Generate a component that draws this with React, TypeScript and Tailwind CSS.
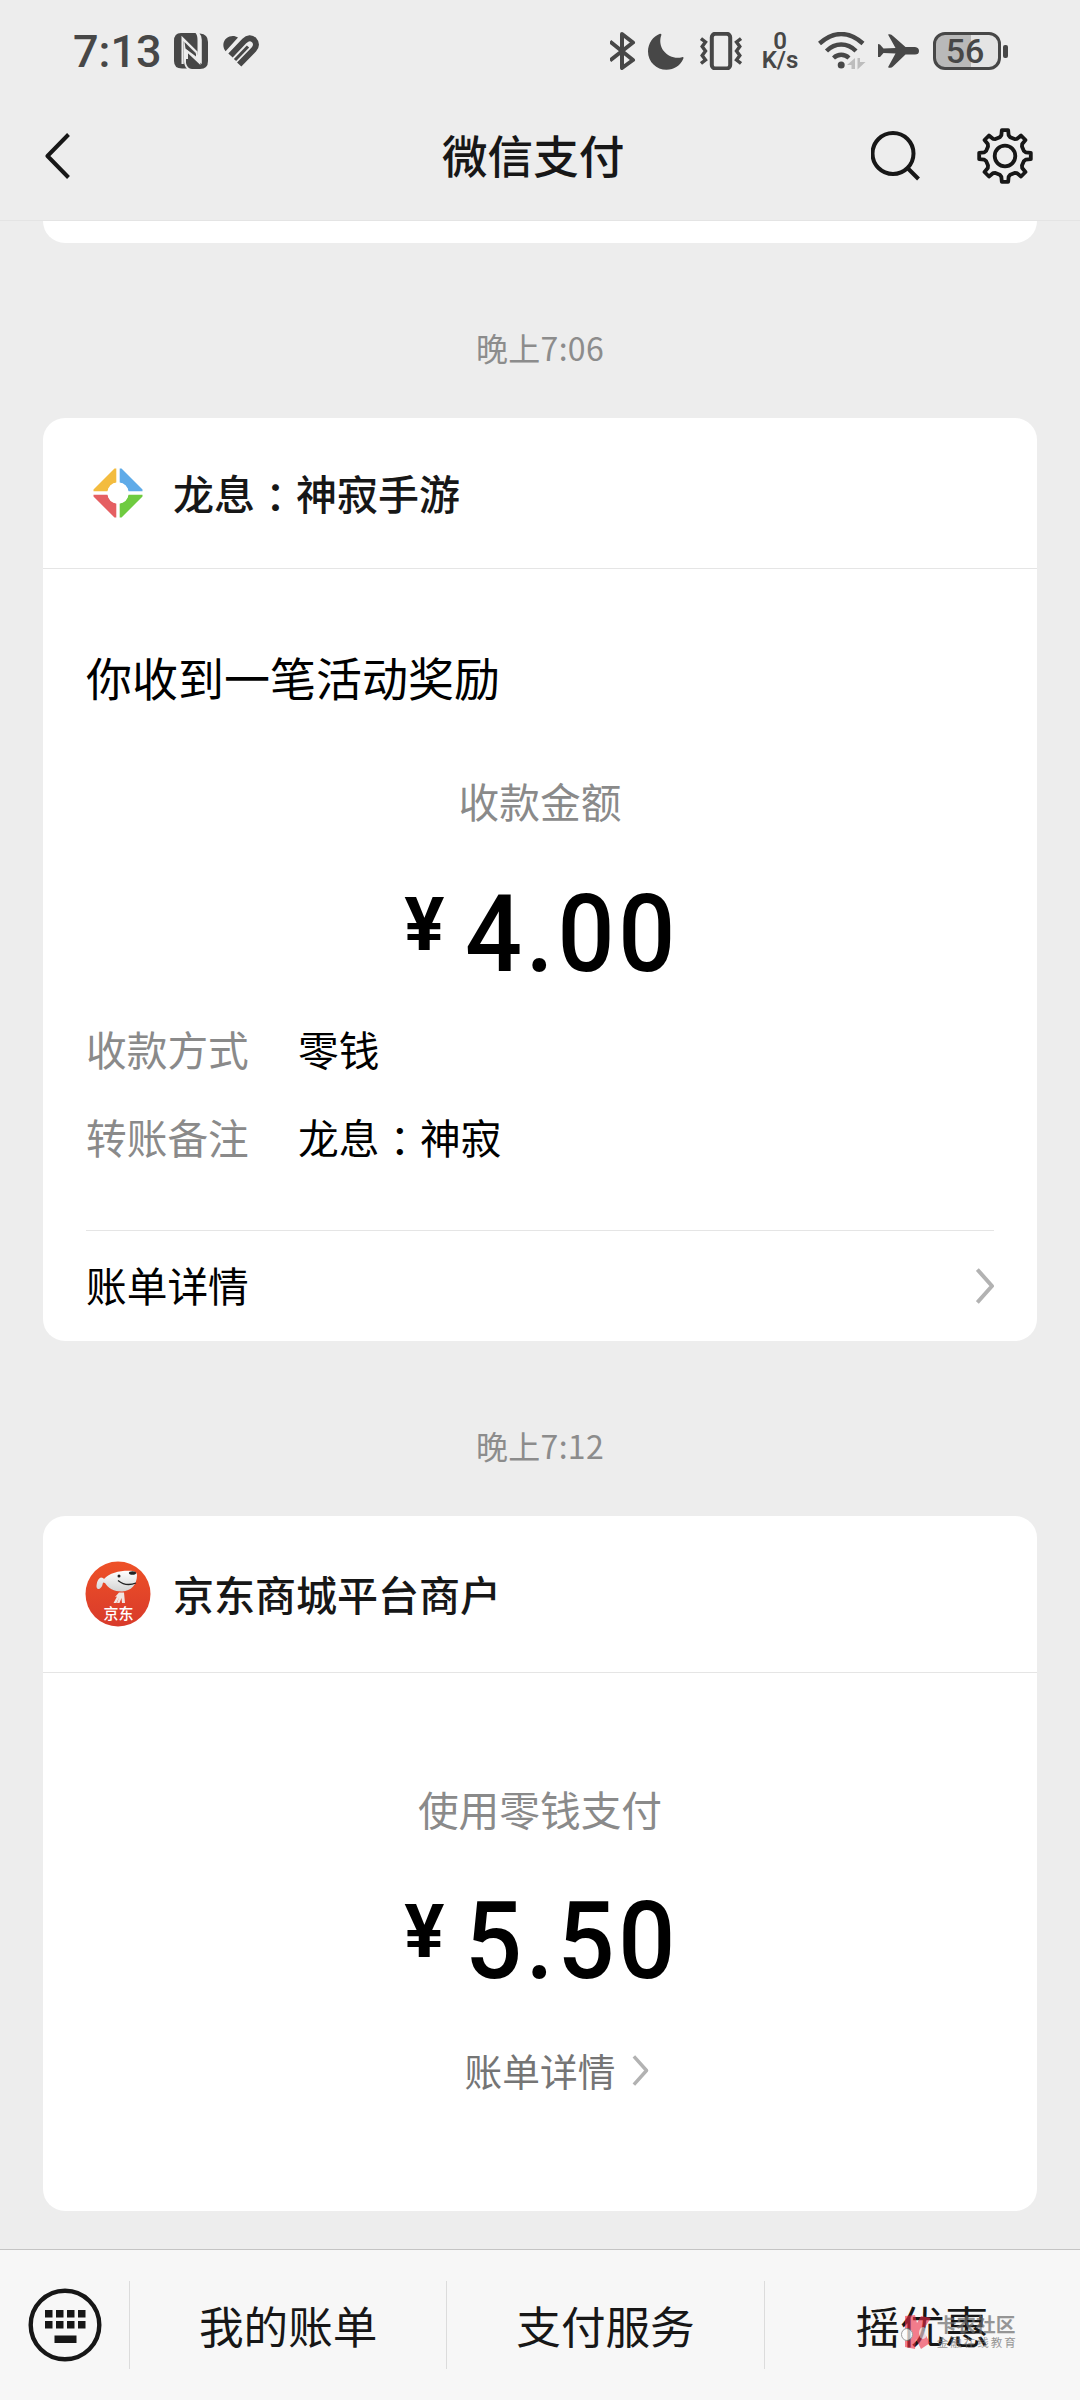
import type { ReactNode } from 'react';

const cjk = "font-['Noto_Sans_CJK_SC',sans-serif]";
const latin = "font-['Roboto','Noto_Sans',sans-serif]";

const NfcIcon = () => (
  <svg className="w-[34px] h-[36px] ml-[15px]" viewBox="0 0 34 36" fill="#474747">
    <path d="M7 0H21.5Q23.5 2 23.5 7V22L10 6.2V28Q10 33 13 35.6H8Q0 35.6 0 28V8Q0 0 7 0Z" />
    <path d="M26 0.5Q34 1 34 9V28Q34 36 26 36H18Q13 35.5 12 30V13L24.5 28.5L27.8 31V7Q27.8 2.5 25.5 0.5Z" />
    <path d="M8.6 31V5.4L22.6 19.3V25.3L12.9 17.5V26" fill="none" stroke="#ededed" strokeWidth="2.2" />
    <path d="M10.5 9L22 20.5V23.5L11.5 15.5Z" />
    <path d="M25.5 3V30L13 18" fill="none" stroke="#ededed" strokeWidth="1.8" />
  </svg>
);

const HealthIcon = () => (
  <svg className="w-[37px] h-[32px] ml-[15px]" viewBox="0 0 37 32" fill="none" stroke="#474747">
    <path d="M2.6 16.2C-1 11.5 0 6 3.5 3.2C7 0.3 12 0.3 15 2.6Z" fill="#474747" stroke="none" />
    <path d="M7.5 20.5L21.5 5.8C24.8 2.5 28.5 2.6 31 5C33.7 7.8 33.6 11.5 30.8 14.5L16.2 29.5" strokeWidth="6" />
    <path d="M12 25L25 11.5" strokeWidth="3.2" />
  </svg>
);

const BluetoothIcon = () => (
  <svg className="w-[27px] h-[38px]" viewBox="0 0 27 38" fill="none" stroke="#474747" strokeWidth="4" strokeLinejoin="round">
    <path d="M0 9.5L23 28L12 36V2L23 10.5L0 28.5" />
  </svg>
);

const MoonIcon = () => (
  <svg className="w-[36px] h-[37px] ml-[11px]" viewBox="0 0 36 37" fill="#474747">
    <path d="M12 0.7Q14 0.5 13.3 2.2C11.5 7 12 13 15.5 17.8C20 23.5 27.5 26.2 34 24.2Q36 23.8 35.4 25.5C32.5 32.5 26 36.8 18.5 36.8C8.5 36.8 0 29 0 18.5C0 10.5 5 3.2 12 0.7Z" />
  </svg>
);

const VibrateIcon = () => (
  <svg className="w-[42px] h-[38px] ml-[16px]" viewBox="0 0 42 38" fill="none" stroke="#474747">
    <rect x="11.8" y="1.8" width="18.4" height="34.6" rx="3.5" strokeWidth="4" />
    <path d="M1 6.5L5.5 10L2.2 14.5L5.5 19L2.2 23.5L5.5 28L1 31.5M41 6.5L36.5 10L39.8 14.5L36.5 19L39.8 23.5L36.5 28L41 31.5" strokeWidth="3.4" />
  </svg>
);

const WifiIcon = () => (
  <svg className="w-[48px] h-[38px] ml-[18px]" viewBox="0 0 48 38" fill="none" stroke="#474747" strokeWidth="4.4">
    <path d="M1.5 11.5Q12 2 23.2 2Q34.5 2 45 11.5" />
    <path d="M8.5 19Q15 12.5 23.2 12.5Q31.5 12.5 38 19" />
    <path d="M15.5 26Q19 22.8 23.2 22.8Q27.5 22.8 31 26" />
    <circle cx="23.2" cy="33" r="3.5" fill="#474747" stroke="none" />
    <path d="M37 26V37H33.5V33H29ZM39.5 26H42V30H47.5L39.5 37.5Z" fill="#bdbdbd" stroke="none" />
  </svg>
);

const PlaneIcon = () => (
  <svg className="w-[42px] h-[34px] ml-[12px]" viewBox="0 0 42 34" fill="#474747">
    <path d="M10 0.5Q13 -0.5 15 2L27.5 13H37Q41 13.5 41 17Q41 20.5 37 20.5H27.5L15 32.5Q13 34.5 10 33.2L17.5 19.5L5.5 19L2 23H0V10L2 10.5L5.5 14.5L17.5 14Z" />
  </svg>
);

const Battery = () => (
  <div className="flex items-center ml-[13px] gap-[2px]">
    <div className="w-[68px] h-[38px] rounded-[12px] border-[3.5px] border-[#474747] overflow-hidden bg-[linear-gradient(90deg,#b9b9b9_56%,#e4e4e4_56%)] flex items-center justify-center">
      <span className={`${latin} text-[34px] leading-[34px] font-medium text-[#474747] -ml-[4px]`}>56</span>
    </div>
    <div className="w-[5px] h-[13px] rounded-[2px] bg-[#474747]" />
  </div>
);

const StatusBar = () => (
  <div className="h-[91px] pt-[11px] pl-[73px] pr-[72px] flex items-center justify-between text-[#474747]">
    <div className="flex items-center">
      <span className={`${latin} w-[86px] text-[45px] leading-[45px] font-medium whitespace-nowrap`}>7:13</span>
      <NfcIcon />
      <HealthIcon />
    </div>
    <div className="flex items-center">
      <BluetoothIcon />
      <MoonIcon />
      <VibrateIcon />
      <div className={`${latin} w-[38px] ml-[19px] mr-[1px] flex flex-col items-center text-[24px] leading-[19.5px] font-semibold`}>
        <span>0</span>
        <span>K/s</span>
      </div>
      <WifiIcon />
      <PlaneIcon />
      <Battery />
    </div>
  </div>
);

const BackIcon = () => (
  <svg className="w-[26px] h-[46px]" viewBox="0 0 26 46" fill="none" stroke="#171717" strokeWidth="4" strokeLinejoin="round">
    <path d="M23.5 1.5L2.5 23L23.5 44.5" />
  </svg>
);

const SearchIcon = () => (
  <svg className="w-[50px] h-[50px]" viewBox="0 0 50 50" fill="none" stroke="#171717" strokeWidth="4">
    <circle cx="22" cy="22.5" r="20.5" />
    <path d="M36.5 37L47.5 48" />
  </svg>
);

// eight teeth, 45 degrees apart
const gearPoints = Array.from({ length: 8 }).flatMap((_, i) =>
  [[-15.5, 19.5], [-10, 21], [-7, 26], [7, 26], [10, 21], [15.5, 19.5]].map(([deg, r]) => {
    const a = ((i * 45 + deg) * Math.PI) / 180;
    return `${(28 + r * Math.sin(a)).toFixed(2)},${(28 - r * Math.cos(a)).toFixed(2)}`;
  })
).join(' ');

const GearIcon = () => (
  <svg className="w-[56px] h-[56px] ml-[56px]" viewBox="0 0 56 56" fill="none" stroke="#171717" strokeWidth="3.8" strokeLinejoin="round">
    <polygon points={gearPoints} />
    <circle cx="28" cy="28" r="10.3" />
  </svg>
);

const Chevron = ({ className }: { className: string }) => (
  <svg className={className} viewBox="0 0 18 36" fill="none" stroke="#b2b2b2" strokeWidth="4" strokeLinejoin="round">
    <path d="M1.3 1.5L16 18L1.3 34.5" />
  </svg>
);

const GameLogo = () => (
  <svg className="w-[50px] h-[50px] mx-[8px]" viewBox="0 0 50 50">
    <path d="M23.3 0.5V14.5A11 11 0 0 0 14.5 23.3H0.5V21.5L21.5 0.5Z" fill="#f3bc3f" />
    <path d="M26.7 0.5V14.5A11 11 0 0 1 35.5 23.3H49.5V21.5L28.5 0.5Z" fill="#5fabe8" />
    <path d="M23.3 49.5V35.5A11 11 0 0 1 14.5 26.7H0.5V28.5L21.5 49.5Z" fill="#e55f62" />
    <path d="M26.7 49.5V35.5A11 11 0 0 0 35.5 26.7H49.5V28.5L28.5 49.5Z" fill="#6fcb40" />
    <circle cx="25" cy="25" r="10.5" fill="#fff" />
  </svg>
);

const JdLogo = () => (
  <svg className="w-[66px] h-[66px]" viewBox="0 0 66 66">
    <defs>
      <linearGradient id="jd" x1="0" y1="0" x2="0" y2="1">
        <stop offset="0" stopColor="#ee5127" />
        <stop offset="1" stopColor="#d83a2b" />
      </linearGradient>
      <linearGradient id="dog" x1="0" y1="0" x2="0" y2="1">
        <stop offset="0" stopColor="#ffffff" />
        <stop offset="1" stopColor="#d3d3d3" />
      </linearGradient>
    </defs>
    <circle cx="33" cy="33" r="32.5" fill="url(#jd)" />
    <path d="M19 18C25 11 38 9 48 10Q52 11 52 14C52 24 46 30 37 30.5C29 30.5 23 27 20 22L18 21.5C17.5 24 17 26 15 27.5Q12 29 11.5 26C11.5 22 13 17 16 16.5Q18.5 16.5 19 18Z" fill="url(#dog)" />
    <path d="M33 19.5Q41 26 51 22" fill="none" stroke="#222" strokeWidth="1.3" />
    <ellipse cx="47.5" cy="12" rx="3.6" ry="1.8" fill="#222" />
    <circle cx="34" cy="15" r="1.5" fill="#222" />
    <path d="M30 36L34 31.5H39L40 42H37L36.5 37L34.5 42H32L34 36.5L31.5 42H28.5L32 35.5Z" fill="#f1e4e0" />
    <text x="33.5" y="57.5" textAnchor="middle" fontSize="15" fill="#fff" fontWeight="500" fontFamily="Noto Sans CJK SC, sans-serif">京东</text>
  </svg>
);

const KeyboardIcon = () => (
  <svg className="w-[74px] h-[74px]" viewBox="0 0 74 74" fill="#171717">
    <circle cx="37" cy="37" r="34.3" fill="none" stroke="#171717" strokeWidth="4.4" />
    {[17, 28, 39, 50].map((x) => (
      <g key={x}>
        <rect x={x} y="22" width="7.5" height="7.5" />
        <rect x={x} y="33" width="7.5" height="7.5" />
      </g>
    ))}
    <rect x="26.5" y="47.5" width="22" height="7.5" />
  </svg>
);

// full-width colon centred in its cell, sitting slightly low
const Colon = () => <span className="relative top-[3px] leading-none font-['Noto_Sans_CJK_TC',sans-serif]">：</span>;

const TimeLabel = ({ children }: { children: ReactNode }) => (
  <div className="text-center text-[32px] leading-[40px] tracking-[0.3px] text-[#8c8c8c]">{children}</div>
);

const Amount = ({ value }: { value: string }) => (
  <div className={`${latin} flex items-start justify-center text-black font-medium`}>
    <span className="text-[75px] leading-[76px] mt-[6px] font-bold">¥</span>
    <span className="text-[108px] leading-[108px] tracking-[4px] ml-[12px] -mr-[11px] scale-x-[0.93]">{value}</span>
  </div>
);

const InfoRow = ({ label, children }: { label: string; children: ReactNode }) => (
  <div className="flex text-[40.7px] leading-[50px]">
    <span className="w-[212px] text-[#8a8a8a]">{label}</span>
    <span className="text-black">{children}</span>
  </div>
);

const Watermark = () => (
  <div className="absolute left-[136px] top-[65px] flex items-start opacity-70">
    <svg className="w-[32px] h-[34px]" viewBox="0 0 32 34">
      <path d="M5 1L15 0L17 8L21 1L31 3L23 15L30 28L21 34L16 24L15 34L5 32Z" fill="#ee2a45" opacity="0.85" />
      <ellipse cx="7" cy="19.5" rx="5.5" ry="6" fill="#fff" stroke="#777" />
      <ellipse cx="23" cy="18" rx="4" ry="6" fill="#eee" opacity="0.8" />
    </svg>
    <div className="ml-[5px] text-[#6d6d6d] whitespace-nowrap">
      <div className="text-[19.7px] leading-[18px] font-bold">卡农社区</div>
      <div className="text-[11.5px] leading-[12px] mt-[3px] tracking-[2px]">金融在线教育</div>
    </div>
  </div>
);

const App = () => {
  return (
    <div className={`${cjk} w-[1080px] h-[2400px] bg-[#ededed] flex flex-col overflow-hidden`}>
      <StatusBar />
      <header className="h-[130px] pl-[45px] pr-[47px] flex items-center border-b border-[#e4e4e4]">
        <BackIcon />
        <h1 className="ml-[371px] flex-1 text-[45.6px] leading-[60px] font-medium text-[#171717] -mt-[4px]">微信支付</h1>
        <SearchIcon />
        <GearIcon />
      </header>

      <main className="flex-1 px-[43px]">
        <div className="h-[22px] bg-white rounded-b-[22px]" />

        <div className="pt-[84px] pb-[51px]">
          <TimeLabel>晚上7:06</TimeLabel>
        </div>

        <section className="h-[923px] bg-white rounded-[22px] flex flex-col">
          <div className="h-[151px] px-[42px] flex items-center border-b border-[#e5e5e5]">
            <GameLogo />
            <h2 className="ml-[22px] text-[41px] leading-[50px] font-medium text-[#171717] -mt-[3px]">
              龙息<Colon />神寂手游
            </h2>
          </div>
          <div className="px-[43px] pt-[77px]">
            <p className="text-[46px] leading-[60px] text-black">你收到一笔活动奖励</p>
            <p className="mt-[70px] text-center text-[40.7px] leading-[50px] text-[#8a8a8a]">收款金额</p>
            <div className="mt-[54px]">
              <Amount value="4.00" />
            </div>
            <div className="mt-[36px] flex flex-col gap-[38px]">
              <InfoRow label="收款方式">零钱</InfoRow>
              <InfoRow label="转账备注">龙息<Colon />神寂</InfoRow>
            </div>
            <div className="mt-[68px] h-[111px] border-t border-[#e5e5e5] flex items-center justify-between">
              <span className="text-[40.7px] leading-[50px] text-black -mt-[2px]">账单详情</span>
              <Chevron className="w-[18px] h-[36px]" />
            </div>
          </div>
        </section>

        <div className="pt-[84px] pb-[51px]">
          <TimeLabel>晚上7:12</TimeLabel>
        </div>

        <section className="h-[695px] bg-white rounded-[22px] flex flex-col">
          <div className="h-[157px] px-[42px] flex items-center border-b border-[#e5e5e5]">
            <JdLogo />
            <h2 className="ml-[22px] text-[41px] leading-[50px] font-medium text-[#171717] -mt-[2px]">京东商城平台商户</h2>
          </div>
          <div className="pt-[111px] flex flex-col items-center">
            <p className="text-[40.7px] leading-[50px] text-[#8a8a8a]">使用零钱支付</p>
            <div className="mt-[53px]">
              <Amount value="5.50" />
            </div>
            <div className="mt-[50px] pl-[34px] flex items-center text-[37.7px] leading-[50px] text-[#757575]">
              账单详情
              <Chevron className="w-[17px] h-[31px] ml-[17px]" />
            </div>
          </div>
        </section>
      </main>

      <footer className="h-[151px] flex items-center bg-[#f7f7f7] border-t border-[#c4c4c4] text-[44.6px] leading-[60px] text-[#171717]">
        <div className="w-[129px] flex justify-center">
          <KeyboardIcon />
        </div>
        <div className="flex-1 h-[88px] border-l border-[#dcdcdc] flex items-center justify-center">我的账单</div>
        <div className="flex-1 h-[88px] border-l border-[#dcdcdc] flex items-center justify-center">支付服务</div>
        <div className="relative flex-1 h-[151px] flex items-center">
          <div className="w-full h-[88px] border-l border-[#dcdcdc] flex items-center justify-center">摇优惠</div>
          <Watermark />
        </div>
      </footer>
    </div>
  );
};

export default App;
